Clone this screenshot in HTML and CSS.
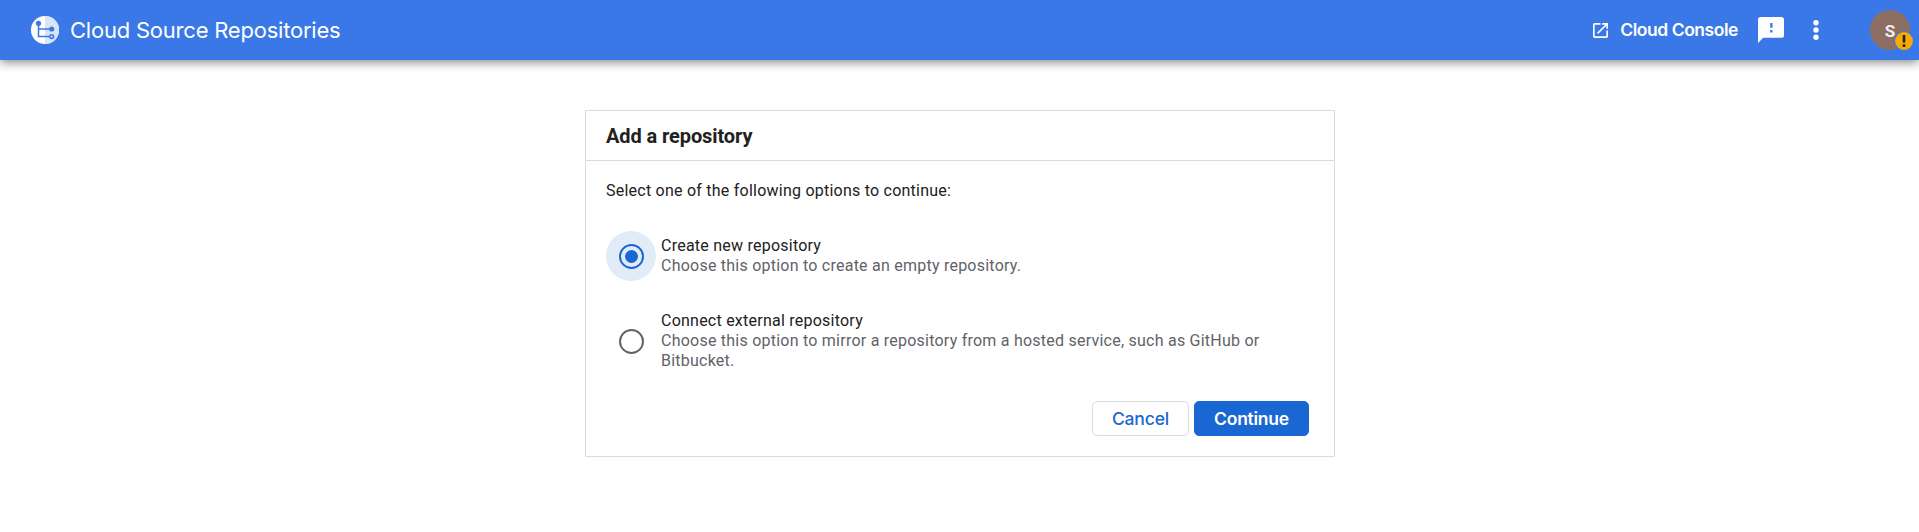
FILE: index.html
```html
<!DOCTYPE html>
<html lang="en">
<head>
<meta charset="utf-8">
<title>Cloud Source Repositories</title>
<link rel="stylesheet" href="styles.css">
</head>
<body>
<header class="topbar">
  <a class="brand">
    <svg class="brand-logo" viewBox="0 0 28 28" aria-hidden="true">
      <circle cx="14" cy="14" r="14" fill="#fff"/>
      <path d="M14 0a14 14 0 0 1 0 28z" fill="#d8e4fa"/>
      <path d="M7.5 7.500v13h11M7.500 13h12" fill="none" stroke="#3b78e7" stroke-width="1.500"/>
      <circle cx="7.500" cy="7.300" r="2.600" fill="#3b78e7"/>
      <circle cx="20.700" cy="13" r="2.600" fill="#3b78e7"/>
      <circle cx="20.700" cy="20.600" r="1.900" fill="#d8e4fa" stroke="#3b78e7" stroke-width="1.600"/>
    </svg>
    <span class="brand-name">Cloud Source Repositories</span>
  </a>
  <nav class="tools">
    <a class="console">
      <svg class="launch" viewBox="3 3 18 18" aria-hidden="true"><path fill="#fff" d="M19 19H5V5h7V3H5a2 2 0 0 0-2 2v14a2 2 0 0 0 2 2h14c1.100 0 2-.9 2-2v-7h-2v7zM14 3v2h3.590l-9.830 9.830 1.410 1.410L19 6.410V10h2V3h-7z"/></svg>
      <span class="console-name">Cloud Console</span>
    </a>
    <svg class="feedback" viewBox="0 0 26 26" aria-hidden="true"><path fill="#fff" d="M2.600 0h20.800A2.600 2.600 0 0 1 26 2.600v15.600a2.600 2.600 0 0 1-2.600 2.600H5.200L0 26V2.600A2.600 2.600 0 0 1 2.600 0z"/><path fill="#3b78e7" d="M12.200 6h2.300v4.700h-2.300zM12.200 13h2.300v2.500h-2.300z"/></svg>
    <svg class="more" viewBox="0 0 6 20" aria-hidden="true"><g fill="#fff"><circle cx="3" cy="2.700" r="2.700"/><circle cx="3" cy="10" r="2.700"/><circle cx="3" cy="17.300" r="2.700"/></g></svg>
    <div class="avatar">
      <span>S</span>
      <svg class="badge" viewBox="0 0 20 20" aria-hidden="true"><circle cx="10" cy="10" r="9.900" fill="#3b78e7"/><circle cx="10" cy="10" r="8.900" fill="#f9ab00"/><path fill="#202124" d="M8.700 4h2.600v7.500H8.700zM8.700 13.300h2.600V16H8.700z"/></svg>
    </div>
  </nav>
</header>
<main class="card">
  <h1 class="card-title">Add a repository</h1>
  <div class="card-body">
    <p class="intro">Select one of the following options to continue:</p>
    <label class="option">
      <span class="halo halo-on"><span class="radio radio-on"></span></span>
      <span class="option-text">Create new repository<br><span class="hint">Choose this option to create an empty repository.</span></span>
    </label>
    <label class="option option-external">
      <span class="halo"><span class="radio"></span></span>
      <span class="option-text">Connect external repository<br><span class="hint">Choose this option to mirror a repository from a hosted service, such as GitHub or Bitbucket.</span></span>
    </label>
    <div class="actions">
      <button class="button cancel">Cancel</button>
      <button class="button continue">Continue</button>
    </div>
  </div>
</main>
</body>
</html>
```
FILE: styles.css
```css
* { box-sizing: border-box; }
body {
  margin: 0;
  background: #fff;
  color: #212121;
  font: 16px/20px Roboto, "Liberation Sans", sans-serif;
  letter-spacing: 0.235px;
}
.topbar {
  display: flex;
  align-items: center;
  justify-content: space-between;
  height: 60px;
  padding: 0 9px 0 31px;
  background: #3b78e7;
  color: #fff;
  box-shadow: 0 2px 10px rgba(0, 0, 0, 0.5);
}
.brand { display: flex; align-items: center; gap: 11px; }
.brand-logo { width: 28px; height: 28px; }
.brand-name { font: 22px/28px Inter, sans-serif; letter-spacing: -0.22px; }
.tools { display: flex; align-items: center; }
.console { display: flex; align-items: center; gap: 12px; }
.launch { width: 15px; height: 15px; }
.console-name { font: 600 17.5px/24px Inter, sans-serif; letter-spacing: -0.45px; }
.feedback { width: 26px; height: 26px; margin-left: 20px; }
.more { width: 6px; height: 20px; margin-left: 29px; }
.avatar {
  position: relative;
  width: 40px;
  height: 40px;
  margin-left: 51px;
  border-radius: 50%;
  background: #8d6e63;
  color: #f3efed;
  font: 700 17px/42px Roboto, sans-serif;
  text-align: center;
}
.badge { position: absolute; left: 24px; top: 21px; width: 20px; height: 20px; }
.card {
  width: 750px;
  height: 347px;
  margin: 50px 584px 0 auto;
  border: 1px solid #dadce0;
}
.card-title {
  margin: 0;
  height: 50px;
  padding: 0 20px;
  border-bottom: 1px solid #dadce0;
  font-size: 20px;
  font-weight: 700;
  line-height: 51px;
  letter-spacing: -0.1px;
}
.card-body { padding: 20px 25px 20px 20px; }
.intro { margin: 0 0 30px; }
.option { display: flex; align-items: center; gap: 5px; }
.option-external { margin-top: 30px; }
.halo {
  display: flex;
  flex: none;
  align-items: center;
  justify-content: center;
  width: 50px;
  height: 50px;
  border-radius: 50%;
}
.halo-on { background: #e2ecf8; }
.radio {
  display: flex;
  align-items: center;
  justify-content: center;
  width: 25px;
  height: 25px;
  border: 2px solid #5f6368;
  border-radius: 50%;
}
.radio-on { border-color: #1967d2; }
.radio-on::after { content: ""; width: 13px; height: 13px; border-radius: 50%; background: #1967d2; }
.hint { color: #5f6368; }
.actions { display: flex; justify-content: flex-end; gap: 5px; margin-top: 30px; }
.button {
  height: 35px;
  padding: 0;
  border: 1px solid #dadce0;
  border-radius: 5px;
  background: #fff;
  color: #1967d2;
  font: 500 17.5px/32px Inter, sans-serif;
  letter-spacing: -0.15px;
}
.cancel { width: 97px; }
.continue { width: 115px; border-color: #1967d2; background: #1967d2; color: #fff; font-weight: 600; letter-spacing: -0.25px; }
```
